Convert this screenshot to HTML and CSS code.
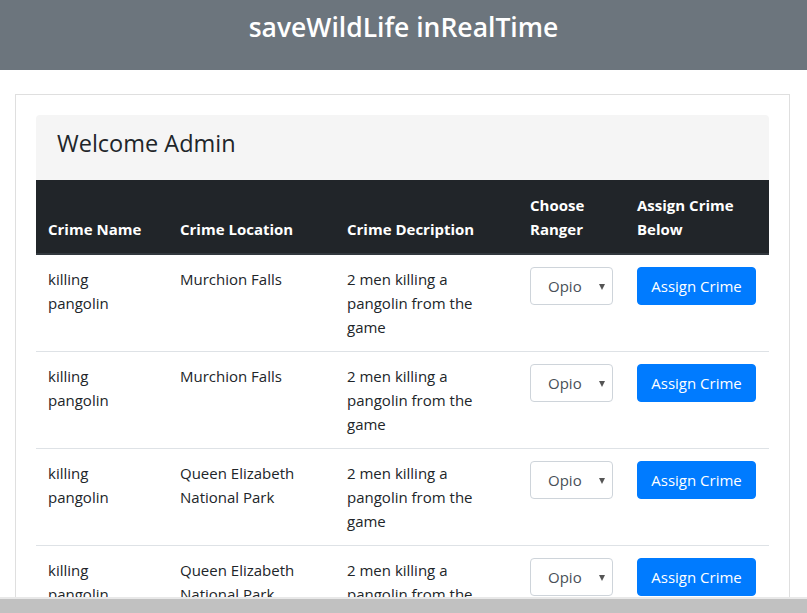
FILE: index.html
```html
<!DOCTYPE html>
<html>
<head>
<meta charset="utf-8">
<link rel="stylesheet" href="styles.css">
</head>
<body>
<header class="topbar"><h1 class="title">saveWildLife inRealTime</h1></header>
<main class="card">
  <div class="welcome"><h2 class="welcome-text">Welcome Admin</h2></div>
  <table class="crimes">
    <colgroup>
      <col class="c1"><col class="c2"><col class="c3"><col class="c4"><col class="c5">
    </colgroup>
    <thead>
      <tr><th>Crime Name</th><th>Crime Location</th><th>Crime Decription</th><th>Choose Ranger</th><th>Assign Crime Below</th></tr>
    </thead>
    <tbody>
      <tr>
        <td class="name">killing pangolin</td><td>Murchion Falls</td><td>2 men killing a pangolin from the game</td>
        <td><div class="sel"><select><option>Opio</option></select></div></td>
        <td><button class="btn">Assign Crime</button></td>
      </tr>
      <tr>
        <td class="name">killing pangolin</td><td>Murchion Falls</td><td>2 men killing a pangolin from the game</td>
        <td><div class="sel"><select><option>Opio</option></select></div></td>
        <td><button class="btn">Assign Crime</button></td>
      </tr>
      <tr>
        <td class="name">killing pangolin</td><td>Queen Elizabeth National Park</td><td>2 men killing a pangolin from the game</td>
        <td><div class="sel"><select><option>Opio</option></select></div></td>
        <td><button class="btn">Assign Crime</button></td>
      </tr>
      <tr>
        <td class="name">killing pangolin</td><td>Queen Elizabeth National Park</td><td>2 men killing a pangolin from the game</td>
        <td><div class="sel"><select><option>Opio</option></select></div></td>
        <td><button class="btn">Assign Crime</button></td>
      </tr>
    </tbody>
  </table>
</main>
<div class="hscroll"></div>
</body>
</html>
```
FILE: styles.css
```css
html, body { margin: 0; padding: 0; }
body {
  font-family: "Open Sans", "Noto Sans", sans-serif;
  font-size: 15px;
  color: #212529;
  background: #fff;
  overflow: hidden;
  height: 613px;
}
.topbar {
  background: #6c757d;
  height: 70px;
  display: flex;
  justify-content: center;
}
.title {
  margin: 0;
  padding-top: 9px;
  color: #fff;
  font-size: 26.5px;
  font-weight: 600;
  line-height: 36px;
}
.card {
  margin: 24px 17px 0 15px;
  border: 1px solid #dfdfdf;
  border-bottom: none;
  padding: 20px 20px 0 20px;
}
.welcome {
  background: #f5f5f5;
  border-radius: 4px 4px 0 0;
  height: 65px;
  display: flex;
  align-items: flex-start;
  padding-left: 21px;
  box-sizing: border-box;
  padding-top: 13px;
}
.welcome-text {
  margin: 0;
  font-size: 23.5px;
  font-weight: 400;
  line-height: 30px;
}
.crimes {
  width: 733px;
  border-collapse: collapse;
  table-layout: fixed;
}
.c1 { width: 132px; } .c2 { width: 167px; } .c3 { width: 183px; } .c4 { width: 107px; } .c5 { width: 144px; }
.crimes th {
  background: #212529;
  color: #fff;
  font-weight: 700;
  font-size: 15px;
  text-align: left;
  vertical-align: bottom;
  padding: 12px 12px 12px 12px;
  line-height: 24px;
  border-bottom: 2px solid #32383e;
}
.crimes thead tr { height: 74px; }
.crimes td {
  vertical-align: top;
  padding: 12px 12px 12px 12px;
  line-height: 24px;
  border-top: 1px solid #dee2e6;
  height: 72px;
}
.crimes td.name { padding-right: 28px; }
.crimes thead + tbody tr:first-child td { border-top: none; }
.sel {
  position: relative;
  width: 83px;
}
.sel select {
  -webkit-appearance: none;
  appearance: none;
  width: 83px;
  height: 38px;
  border: 1px solid #ced4da;
  border-radius: 4px;
  background: #fff;
  font-family: inherit;
  font-size: 15px;
  color: #495057;
  padding: 0 0 0 17px;
}
.sel::after {
  content: "";
  position: absolute;
  right: 8px;
  top: 17px;
  border-left: 3px solid transparent;
  border-right: 3px solid transparent;
  border-top: 6px solid #555;
  pointer-events: none;
}
.btn {
  background: #007bff;
  color: #fff;
  border: 1px solid #007bff;
  border-radius: 4px;
  height: 38px;
  width: 119px;
  font-family: inherit;
  font-size: 15px;
  padding: 0;
}
.hscroll {
  position: fixed;
  left: 0;
  right: 0;
  bottom: 0;
  height: 14px;
  background: #c1c1c1;
  border-top: 2px solid #e8e8e8;
}
```
